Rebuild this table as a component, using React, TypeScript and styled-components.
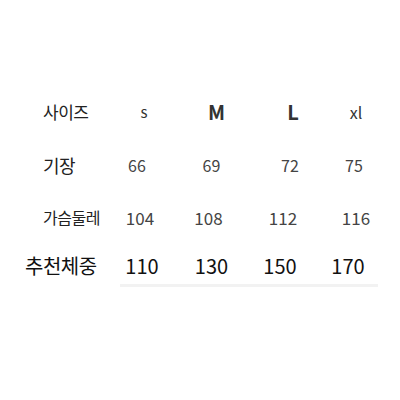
import React from "react";
import styled, { createGlobalStyle } from "styled-components";

const Global = createGlobalStyle`
  html, body { margin: 0; padding: 0; background: #ffffff; }
  body { font-family: "Noto Sans CJK KR", "Noto Sans", sans-serif; }
`;

const Page = styled.div`
  width: 400px;
  height: 400px;
  box-sizing: border-box;
  padding-top: 85px;
  background: #ffffff;
`;

const Table = styled.div`
  display: flex;
  flex-direction: column;
`;

const Row = styled.div<{ $h: number; $pt: number }>`
  display: grid;
  grid-template-columns: 80px 72px 71px 74px 66px;
  box-sizing: border-box;
  height: ${(p) => p.$h}px;
  padding-top: ${(p) => p.$pt}px;
  align-items: center;
  padding-left: 25px;
`;

const Label = styled.div<{ $size: number; $indent: number; $color: string }>`
  font-size: ${(p) => p.$size}px;
  font-weight: 400;
  padding-left: ${(p) => p.$indent}px;
  color: ${(p) => p.$color};
  white-space: nowrap;
  line-height: 1;
  letter-spacing: -0.5px;
`;

const Cell = styled.div<{ $size: number; $weight: number; $color: string; $dx: number }>`
  font-size: ${(p) => p.$size}px;
  font-weight: ${(p) => p.$weight};
  color: ${(p) => p.$color};
  text-align: center;
  line-height: 1;
  transform: translateX(${(p) => p.$dx}px);
`;

const Underline = styled.div`
  margin-left: 120px;
  width: 258px;
  height: 3px;
  background: #f2f2f2;
`;

type R = {
  label: string;
  h: number;
  pt: number;
  labelSize: number;
  indent: number;
  labelColor: string;
  cells: { t: string; size: number; weight: number; dx: number }[];
  color: string;
};

const rows: R[] = [
  {
    label: "사이즈",
    h: 53,
    pt: 0,
    labelSize: 17,
    indent: 18,
    labelColor: "#222",
    color: "#333",
    cells: [
      { t: "s", size: 15, weight: 400, dx: 3 },
      { t: "M", size: 20, weight: 700, dx: 4 },
      { t: "L", size: 20, weight: 700, dx: 8 },
      { t: "xl", size: 16, weight: 400, dx: 1 },
    ],
  },
  {
    label: "기장",
    h: 54,
    pt: 0,
    labelSize: 18,
    indent: 18,
    labelColor: "#222",
    color: "#444",
    cells: [
      { t: "66", size: 16, weight: 400, dx: -4 },
      { t: "69", size: 16, weight: 400, dx: -1 },
      { t: "72", size: 16, weight: 400, dx: 5 },
      { t: "75", size: 16, weight: 400, dx: -1 },
    ],
  },
  {
    label: "가슴둘레",
    h: 50,
    pt: 0,
    labelSize: 16,
    indent: 18,
    labelColor: "#222",
    color: "#444",
    cells: [
      { t: "104", size: 17, weight: 400, dx: -1 },
      { t: "108", size: 17, weight: 400, dx: -4 },
      { t: "112", size: 17, weight: 400, dx: -2 },
      { t: "116", size: 17, weight: 400, dx: 1 },
    ],
  },
  {
    label: "추천체중",
    h: 42,
    pt: 6,
    labelSize: 20,
    indent: 0,
    labelColor: "#111",
    color: "#111",
    cells: [
      { t: "110", size: 20, weight: 400, dx: 1 },
      { t: "130", size: 20, weight: 400, dx: -1 },
      { t: "150", size: 20, weight: 400, dx: -5 },
      { t: "170", size: 20, weight: 400, dx: -7 },
    ],
  },
];

export default function App() {
  return (
    <Page>
      <Global />
      <Table>
        {rows.map((r) => (
          <Row key={r.label} $h={r.h} $pt={r.pt}>
            <Label $size={r.labelSize} $indent={r.indent} $color={r.labelColor}>
              {r.label}
            </Label>
            {r.cells.map((c) => (
              <Cell key={c.t} $size={c.size} $weight={c.weight} $color={r.color} $dx={c.dx}>
                {c.t}
              </Cell>
            ))}
          </Row>
        ))}
        <Underline />
      </Table>
    </Page>
  );
}
